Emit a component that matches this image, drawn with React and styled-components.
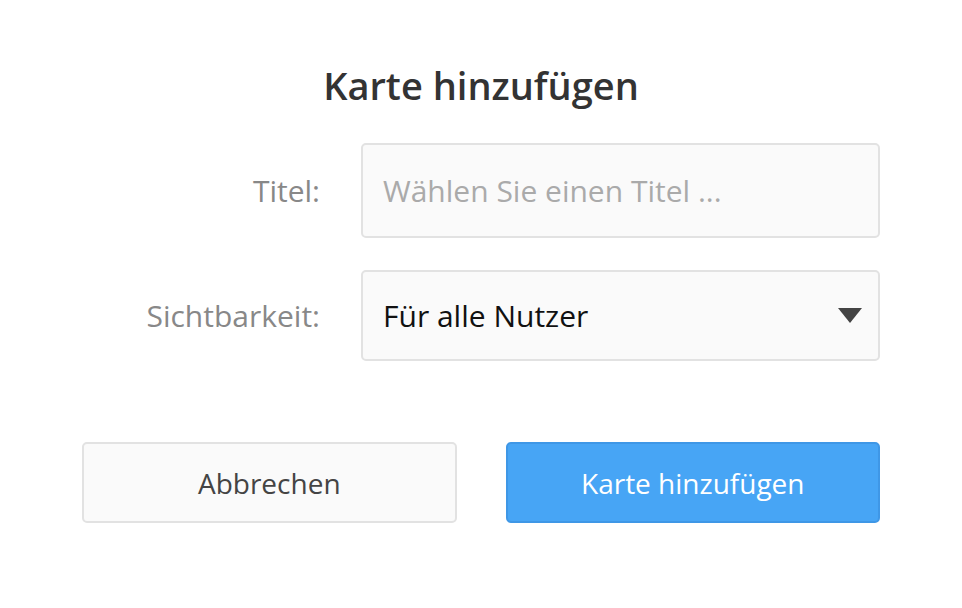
import React from 'react'
import styled, { createGlobalStyle } from 'styled-components'

const GlobalStyle = createGlobalStyle`
  html, body {
    margin: 0;
    padding: 0;
    background: #fff;
  }
  body {
    font-family: 'Open Sans', 'Noto Sans', sans-serif;
  }
`

const Dialog = styled.div`
  width: 798px;
  margin: 0 auto;
  padding-top: 57px;
`

const Title = styled.h1`
  margin: 0 0 30px;
  text-align: center;
  font-size: 38px;
  font-weight: 600;
  line-height: 56px;
  color: #333;
`

const Form = styled.div`
  display: grid;
  grid-template-columns: 238px 519px;
  column-gap: 41px;
  row-gap: 32px;
  align-items: center;
`

const Label = styled.label`
  text-align: right;
  font-size: 30px;
  color: #888;
`

const Field = styled.div`
  position: relative;
  box-sizing: border-box;
  height: ${p => p.h}px;
  display: flex;
  align-items: center;
  padding: 0 20px;
  background: #fafafa;
  border: 2px solid #e2e2e2;
  border-radius: 5px;
  font-size: 30px;
  color: ${p => (p.placeholder ? '#aaa' : '#111')};
`

const Arrow = styled.span`
  position: absolute;
  right: 16px;
  top: 50%;
  margin-top: -8px;
  width: 0;
  height: 0;
  border-left: 12px solid transparent;
  border-right: 12px solid transparent;
  border-top: 15px solid #444;
`

const Actions = styled.div`
  display: flex;
  gap: 49px;
  margin-top: 81px;
`

const Button = styled.button`
  flex: 1;
  box-sizing: border-box;
  height: 81px;
  border-radius: 5px;
  font-family: inherit;
  font-size: 28px;
  cursor: pointer;
  background: ${p => (p.primary ? '#47a5f5' : '#fafafa')};
  border: 2px solid ${p => (p.primary ? '#3f97e6' : '#e2e2e2')};
  color: ${p => (p.primary ? '#fff' : '#444')};
`

export default function App() {
  return (
    <>
      <GlobalStyle />
      <Dialog>
        <Title>Karte hinzufügen</Title>
        <Form>
          <Label>Titel:</Label>
          <Field h={95} placeholder>Wählen Sie einen Titel ...</Field>
          <Label>Sichtbarkeit:</Label>
          <Field h={91}>
            Für alle Nutzer
            <Arrow />
          </Field>
        </Form>
        <Actions>
          <Button>Abbrechen</Button>
          <Button primary>Karte hinzufügen</Button>
        </Actions>
      </Dialog>
    </>
  )
}
